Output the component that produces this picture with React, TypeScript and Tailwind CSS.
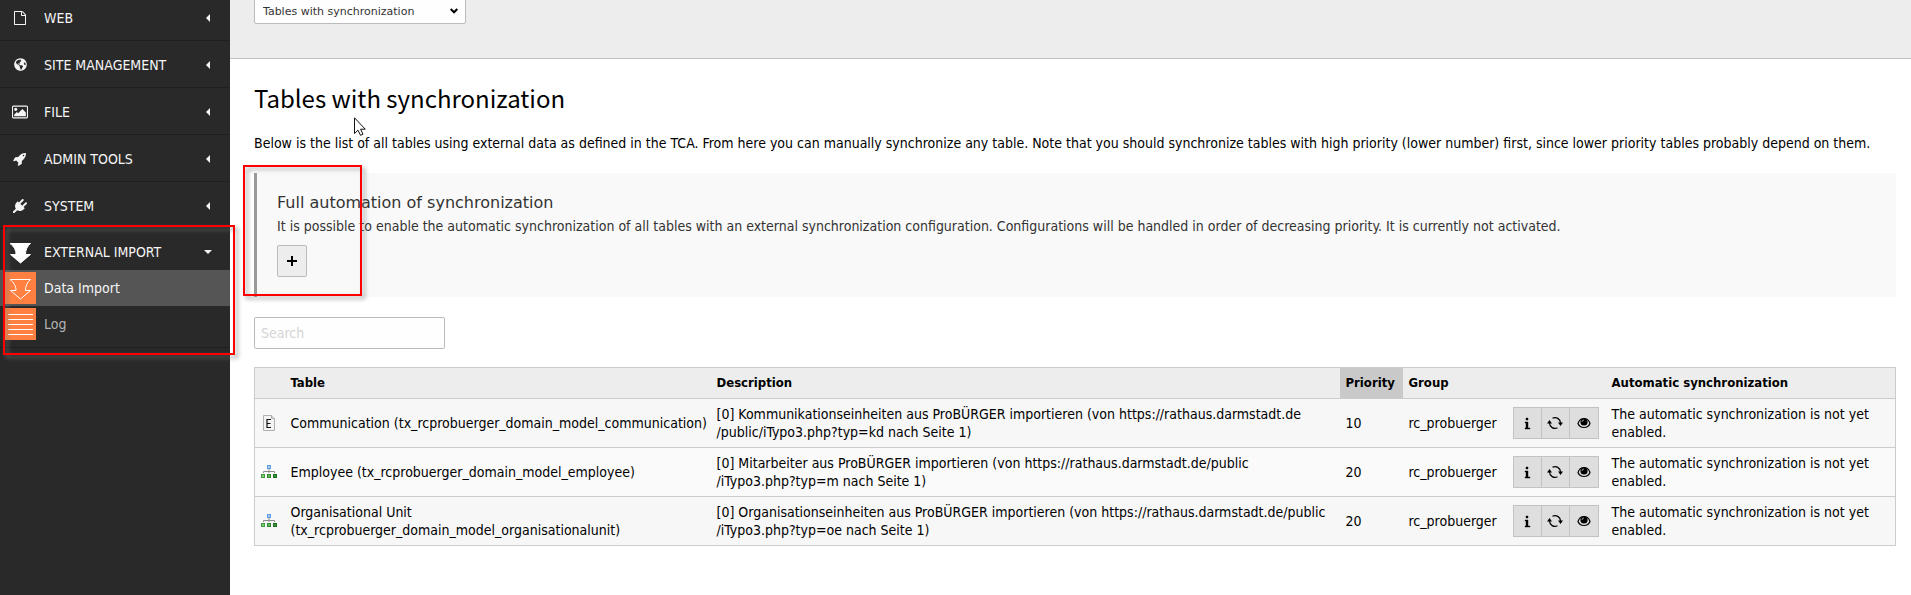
import type { ReactNode } from 'react';
import { FaGlobeAmericas } from 'react-icons/fa';

const modules = [
  { label: 'WEB', icon: <FileIcon /> },
  { label: 'SITE MANAGEMENT', icon: <FaGlobeAmericas className="h-[13px] w-[13px]" /> },
  { label: 'FILE', icon: <PictureIcon /> },
  { label: 'ADMIN TOOLS', icon: <RocketIcon /> },
  { label: 'SYSTEM', icon: <PlugIcon /> },
];

const rows = [
  {
    icon: <RecordIcon />,
    table: 'Communication (tx_rcprobuerger_domain_model_communication)',
    description: [
      '[0] Kommunikationseinheiten aus ProBÜRGER importieren (von https://rathaus.darmstadt.de',
      '/public/iTypo3.php?typ=kd nach Seite 1)',
    ],
    priority: 10,
  },
  {
    icon: <TreeIcon />,
    table: 'Employee (tx_rcprobuerger_domain_model_employee)',
    description: [
      '[0] Mitarbeiter aus ProBÜRGER importieren (von https://rathaus.darmstadt.de/public',
      '/iTypo3.php?typ=m nach Seite 1)',
    ],
    priority: 20,
  },
  {
    icon: <TreeIcon />,
    table: 'Organisational Unit (tx_rcprobuerger_domain_model_organisationalunit)',
    description: [
      '[0] Organisationseinheiten aus ProBÜRGER importieren (von https://rathaus.darmstadt.de/public',
      '/iTypo3.php?typ=oe nach Seite 1)',
    ],
    priority: 20,
  },
];

function FileIcon() {
  return (
    <svg viewBox="0 0 1792 1792" className="h-3.5 w-3.5" fill="currentColor">
      <path d="M1596 380q28 28 48 76t20 88v1152q0 40-28 68t-68 28h-1344q-40 0-68-28t-28-68v-1600q0-40 28-68t68-28h896q40 0 88 20t76 48zm-444-244v376h376q-10-29-22-41l-313-313q-12-12-41-22zm384 1528v-1024h-416q-40 0-68-28t-28-68v-416h-768v1536h1280z" />
    </svg>
  );
}

function PictureIcon() {
  return (
    <svg viewBox="-64 0 1920 1792" className="h-4 w-4" fill="currentColor">
      <path d="M576 576q0 80-56 136t-136 56-136-56-56-136 56-136 136-56 136 56 56 136zm1024 384v448h-1408v-192l320-320 160 160 512-512zm96-704h-1600q-13 0-22.5 9.5t-9.5 22.5v1216q0 13 9.5 22.5t22.5 9.5h1600q13 0 22.5-9.5t9.5-22.5v-1216q0-13-9.5-22.5t-22.5-9.5zm160 32v1216q0 66-47 113t-113 47h-1600q-66 0-113-47t-47-113v-1216q0-66 47-113t113-47h1600q66 0 113 47t47 113z" />
    </svg>
  );
}

function RocketIcon() {
  return (
    <svg viewBox="0 0 1792 1792" className="h-3.5 w-3.5" fill="currentColor">
      <path d="M1440 448q0-40-28-68t-68-28-68 28-28 68 28 68 68 28 68-28 28-68zm224-288q0 249-75.5 430.5t-253.5 360.5q-81 80-195 176l-20 379q-2 16-16 26l-384 224q-7 4-16 4-12 0-23-9l-64-64q-13-14-8-32l85-276-281-281-276 85q-3 1-9 1-14 0-23-9l-64-64q-17-19-5-39l224-384q10-14 26-16l379-20q96-114 176-195 188-187 358-258t431-71q14 0 24 9.5t10 22.5z" />
    </svg>
  );
}

function PlugIcon() {
  return (
    <svg viewBox="0 0 1792 1792" className="h-3.5 w-3.5" fill="currentColor">
      <path d="M1755 453q37 38 37 90.5t-37 90.5l-401 400 150 150-160 160q-163 163-389.5 186.5t-411.5-100.5l-362 362h-181v-181l362-362q-124-185-100.5-411.5t186.5-389.5l160-160 150 150 400-401q38-37 91-37t90 37 37 90.5-37 90.5l-400 401 234 234 401-400q38-37 91-37t90 37z" />
    </svg>
  );
}

function ImportArrow({ filled = false }: { filled?: boolean }) {
  return (
    <svg viewBox="0 0 32 32" className="h-8 w-8" fill={filled ? '#fff' : 'none'} stroke="#fff" strokeWidth="1">
      <path d="M6 7.500H26.500C23 10.500 21.500 14 21.500 18.500H26.500L16.500 27L6.500 18.500H12C12 14 10 10.500 6 7.500Z" />
    </svg>
  );
}

function LogIcon() {
  return (
    <svg viewBox="0 0 32 32" className="h-8 w-8" stroke="#fff" strokeWidth="1">
      <path d="M4 6.500H29M4 11.500H29M4 16.500H29M4 21.500H29M4 26.500H29" />
    </svg>
  );
}

function RecordIcon() {
  return (
    <svg viewBox="0 0 16 16" className="h-4 w-4">
      <path d="M2.500 .5H10.500L13.500 3.500V15.500H2.500Z" fill="#f4f4f4" stroke="#b0b0b0" />
      <path d="M10.500 .5V3.500H13.500" fill="#ddd" stroke="#b0b0b0" />
      <path d="M10 4.500H6V12.500H10M6 8.500H9.500" fill="none" stroke="#111" strokeWidth="1.200" />
    </svg>
  );
}

function TreeIcon() {
  return (
    <svg viewBox="0 0 16 16" className="h-4 w-4">
      <path d="M8 5V7M2.500 9V7.500H13.500V9M8 7.500V9" fill="none" stroke="#8b8b8b" />
      <rect x="6" y="1" width="4" height="4" fill="#5d9be0" />
      <rect x="7" y="2" width="2" height="2" fill="#a9cdf5" />
      <rect x="0" y="10" width="4" height="4" fill="#3f9a3f" />
      <rect x="1" y="11" width="2" height="2" fill="#85cd7b" />
      <rect x="6" y="10" width="4" height="4" fill="#2f8a2f" />
      <rect x="7" y="11" width="2" height="2" fill="#64b75b" />
      <rect x="12" y="10" width="4" height="4" fill="#1c701c" />
      <rect x="13" y="11" width="2" height="2" fill="#3c953a" />
    </svg>
  );
}

function InfoIcon() {
  return (
    <svg viewBox="0 0 16 16" className="h-4 w-4">
      <path d="M7 3H9V5H7ZM6 7H9V13H11V14H6V13H7V8H6Z" stroke="#000" strokeWidth=".4" />
    </svg>
  );
}

function SyncIcon() {
  return (
    <svg viewBox="0 0 16 16" className="h-4 w-4">
      <path d="M5.500 3.200A5.500 5.500 0 0 1 13.500 8M10.500 12.800A5.500 5.500 0 0 1 2.500 8" fill="none" stroke="#000" strokeWidth="1.200" />
      <path d="M11 7.500H16L13.500 11ZM0 8.500H5L2.500 5Z" />
    </svg>
  );
}

function EyeIcon() {
  return (
    <svg viewBox="0 0 16 16" className="h-4 w-4">
      <path d="M2 8.500C3 5.500 5 3.500 8 3.500S13 5.500 14 8.500C13 11 11 12.500 8 12.500S3 11 2 8.500Z" fill="none" stroke="#000" strokeWidth="1.200" />
      <circle cx="8" cy="7" r="3.600" />
      <path d="M6 7A2 2 0 0 1 8 5" fill="none" stroke="#ddd" strokeWidth=".7" />
    </svg>
  );
}

function ActionButton({ label, children }: { label: string; children: ReactNode }) {
  return (
    <button
      type="button"
      aria-label={label}
      className="-ml-px flex h-8 w-[29px] items-center justify-center border border-[#c3c3c3] bg-[#dedede] first:ml-0 last:w-[30px]"
    >
      {children}
    </button>
  );
}

function Sidebar() {
  return (
    <nav className="w-[230px] shrink-0 bg-[#292929] text-[#f5f5f5]">
      <div className="-mt-1.5">
        {modules.map((module) => (
          <a key={module.label} href="#" className="flex h-[47px] items-center border-b border-[#1f1f1f] pt-px pr-5 pl-1">
            <span className="flex w-8 justify-center">{module.icon}</span>
            <span className="ml-2 flex-1">{module.label}</span>
            <svg viewBox="0 0 4 8" className="h-2 w-1" fill="currentColor">
              <path d="M4 0V8L0 4Z" />
            </svg>
          </a>
        ))}
      </div>

      {/* External import group */}
      <div className="relative border-b border-[#1f1f1f] pb-[5px]">
        <a href="#" className="flex h-[41px] items-center pt-[5px] pr-[18px] pl-1">
          <ImportArrow filled />
          <span className="ml-2 flex-1">EXTERNAL IMPORT</span>
          <svg viewBox="0 0 8 4" className="h-1 w-2" fill="currentColor">
            <path d="M0 0H8L4 4Z" />
          </svg>
        </a>
        <a href="#" className="flex h-9 items-center gap-2 bg-[#555] pl-1">
          <span className="bg-[#ff8040]">
            <ImportArrow />
          </span>
          Data Import
        </a>
        <a href="#" className="flex h-9 items-center gap-2 pl-1 text-[#b3b3b3]">
          <span className="bg-[#ff8040]">
            <LogIcon />
          </span>
          Log
        </a>
        <div className="pointer-events-none absolute -top-1 -right-[5px] -bottom-2 left-[3px] z-10 border-2 border-[#f00] drop-shadow-[3px_3px_2px_rgba(120,120,120,0.7)]" />
      </div>
    </nav>
  );
}

export default function App() {
  return (
    <div className="flex min-h-screen overflow-hidden bg-white font-['DejaVu_Sans_Condensed','DejaVu_Sans',sans-serif] text-sm leading-[18px] text-black">
      <Sidebar />

      <div className="min-w-0 flex-1">
        <header className="flex h-[59px] items-start border-b border-[#c3c3c3] bg-[#ededed] pl-6">
          <div className="relative -mt-2 w-[212px]">
            <select
              aria-label="Function"
              className="h-8 w-full appearance-none rounded-xs border border-[#bbb] bg-[#fefefe] pt-2 pl-2 font-['DejaVu_Sans',sans-serif] text-[11px] text-[#333]"
            >
              <option>Tables with synchronization</option>
            </select>
            <svg viewBox="0 0 8 6" className="pointer-events-none absolute top-4 right-2 h-1.5 w-2" fill="none" stroke="#000" strokeWidth="2">
              <path d="M.7 1L4 4.300L7.300 1" />
            </svg>
          </div>
        </header>

        <main className="pt-[23px] pr-[15px] pl-6">
          <div className="relative">
            <h1 className="font-['Noto_Sans_CJK_SC',sans-serif] text-2xl leading-8">Tables with synchronization</h1>
            <svg viewBox="0 0 12 19" className="absolute top-[35px] left-[100px] h-[19px] w-3" fill="#fff" stroke="#111">
              <path d="M.5 .8V16.500L4 13.200L6.500 18.300L9 17.200L6.600 12.200H11.300Z" />
            </svg>
          </div>
          <p className="mt-5">
            Below is the list of all tables using external data as defined in the TCA. From here you can manually
            synchronize any table. Note that you should synchronize tables with high priority (lower number) first,
            since lower priority tables probably depend on them.
          </p>

          <section className="relative mt-[21px] h-[124px] border-l-3 border-[#999] bg-[#f9f9f9] pt-5 pl-5 text-[#333]">
            <h2 className="font-['DejaVu_Sans',sans-serif] text-base leading-5">Full automation of synchronization</h2>
            <p className="mt-1">
              It is possible to enable the automatic synchronization of all tables with an external synchronization
              configuration. Configurations will be handled in order of decreasing priority. It is currently not
              activated.
            </p>
            <button
              type="button"
              aria-label="Add"
              className="mt-2.5 flex h-8 w-[30px] items-center justify-center rounded-xs border border-[#bbb] bg-[#ededed]"
            >
              <svg viewBox="0 0 10 10" className="h-2.5 w-2.5">
                <path d="M4 0H6V4H10V6H6V10H4V6H0V4H4Z" />
              </svg>
            </button>
            <div className="pointer-events-none absolute -top-2 -left-[17px] h-[131px] w-[119px] border-2 border-[#f00] drop-shadow-[3px_3px_2px_rgba(120,120,120,0.7)] ml-[3px]" />
          </section>

          <input
            type="text"
            aria-label="Search"
            placeholder="Search"
            className="mt-5 block h-8 w-[191px] rounded-xs border border-[#bbb] bg-[#fefefe] px-1.5 placeholder:text-[#d5d5d5]"
          />

          <table className="mt-[18px] w-full table-fixed border-collapse border border-[#ccc] text-left">
            <colgroup>
              <col className="w-[30px]" />
              <col className="w-[426px]" />
              <col />
              <col className="w-[63px]" />
              <col className="w-[104px]" />
              <col className="w-[99px]" />
              <col className="w-[290px]" />
            </colgroup>
            <thead>
              <tr className="border-b border-[#ccc] bg-[#ededed] text-[13px]">
                <th className="p-1.5" />
                <th className="p-1.5">Table</th>
                <th className="p-1.5">Description</th>
                <th className="bg-[#c9c9c9] p-1.5">Priority</th>
                <th className="p-1.5">Group</th>
                <th className="p-1.5" />
                <th className="p-1.5">Automatic synchronization</th>
              </tr>
            </thead>
            <tbody>
              {rows.map((row) => (
                <tr key={row.table} className="border-b border-[#ccc] odd:bg-[#f7f7f7] even:bg-[#fafafa]">
                  <td className="p-1.5">{row.icon}</td>
                  <td className="py-1.5 pl-1.5">{row.table}</td>
                  <td className="p-1.5 whitespace-nowrap">
                    {row.description[0]}
                    <br />
                    {row.description[1]}
                  </td>
                  <td className="p-1.5">{row.priority}</td>
                  <td className="p-1.5">rc_probuerger</td>
                  <td className="px-1.5">
                    <div className="flex">
                      <ActionButton label="Information">
                        <InfoIcon />
                      </ActionButton>
                      <ActionButton label="Synchronize">
                        <SyncIcon />
                      </ActionButton>
                      <ActionButton label="Preview">
                        <EyeIcon />
                      </ActionButton>
                    </div>
                  </td>
                  <td className="p-1.5">The automatic synchronization is not yet enabled.</td>
                </tr>
              ))}
            </tbody>
          </table>
        </main>
      </div>
    </div>
  );
}
